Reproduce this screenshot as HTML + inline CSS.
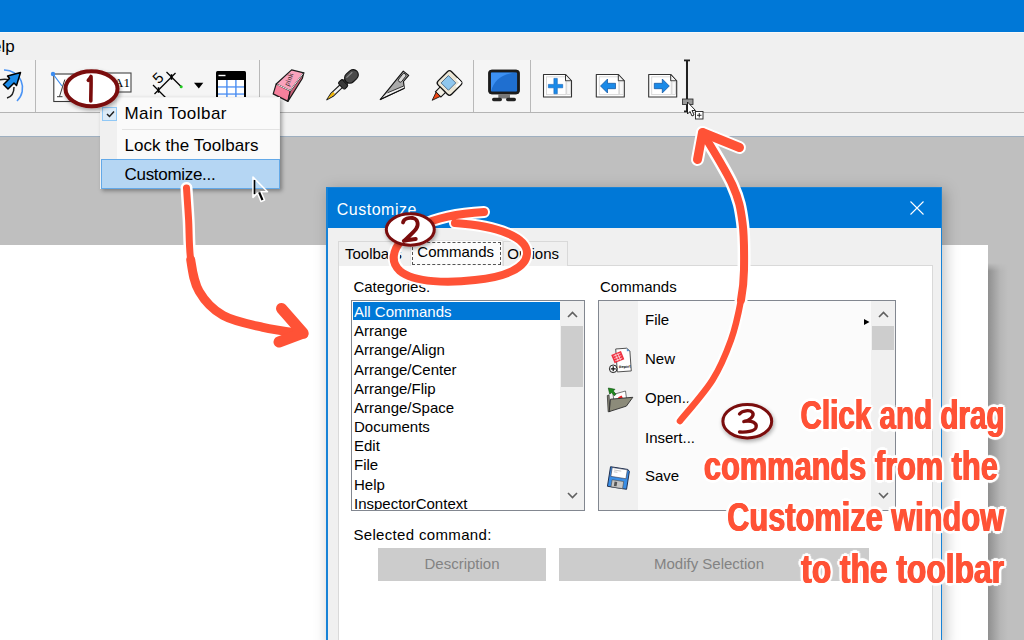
<!DOCTYPE html>
<html><head><meta charset="utf-8">
<style>
*{margin:0;padding:0;box-sizing:border-box}
html,body{width:1024px;height:640px;overflow:hidden;background:#bfbfbf;font-family:"Liberation Sans",sans-serif;position:relative}
.abs{position:absolute}
#title{left:0;top:0;width:1024px;height:32px;background:#0078d7}
#menubar{left:0;top:32px;width:1024px;height:104px;background:#f0f0f0;border-top:1px solid #f8f8f8}
#toolbar{left:0;top:60px;width:685px;height:52px;background:#f5f5f5}
#tbline{left:0;top:112px;width:1024px;height:1px;background:#b4b4b4}
#bluel{left:0;top:136px;width:1024px;height:1px;background:#9eafc0}
#page{left:0;top:245px;width:988px;height:400px;background:#fff}
#pshadow{left:988px;top:263px;width:20px;height:380px;background:linear-gradient(90deg,#8f8f8f,#b5b5b5 60%,#bfbfbf);-webkit-mask-image:linear-gradient(180deg,transparent,#000 8px)}
.sep{width:1px;background:#c8c8c8;top:60px;height:52px}
#dlg{left:326px;top:187px;width:616px;height:460px;background:#f0f0f0;border:1px solid #1883d7;box-shadow:3px 3px 14px rgba(0,0,0,.25)}
#dtitle{left:0;top:0;width:614px;height:40px;background:#0078d7;color:#fff;font-size:16px}
#panel{left:11px;top:77px;width:595px;height:400px;background:#fff;border:1px solid #d9d9d9}
.tab{top:54px;height:24px;background:#f0f0f0;border:1px solid #d9d9d9;border-bottom:none;font-size:15px;color:#000}
.lb{border:1px solid #828790;background:#fff;overflow:hidden}
.li{position:absolute;left:2px;font-size:15px;color:#000;white-space:nowrap}
.sb{background:#f0f0f0}
.txt{position:absolute;white-space:nowrap;color:#000}
#menu{left:100px;top:97px;width:180px;height:92px;background:#fafafa;border:1px solid #f2f2f2;box-shadow:2px 2px 4px rgba(0,0,0,.35)}
.mi{position:absolute;left:25px;font-size:17px;color:#000;white-space:nowrap}
.btn{position:absolute;background:#cccccc;color:#838383;font-size:15px;text-align:center}
.ann{position:absolute;font-weight:bold;color:#ff5236;white-space:nowrap;transform-origin:right top;font-size:41px;line-height:41px;
 text-shadow:0.8px 0 0 #ff5236,-0.8px 0 0 #ff5236,4px 0 1px #fff,-4px 0 1px #fff,0 3px 1px #fff,0 -3px 1px #fff,3px 2px 1px #fff,-3px 2px 1px #fff,3px -2px 1px #fff,-3px -2px 1px #fff}
</style></head><body>
<div id="title" class="abs"></div>
<div id="menubar" class="abs"></div>
<div class="txt" style="left:-8px;top:37px;font-size:17px;color:#000">elp</div>
<div id="toolbar" class="abs"></div>
<div id="tbline" class="abs"></div>
<div id="bluel" class="abs"></div>
<svg class="abs" style="left:0;top:0" width="720" height="125" viewBox="0 0 720 125">
 <g fill="#b9b9b9"><rect x="35" y="60" width="1" height="52"/><rect x="259" y="60" width="1" height="52"/><rect x="473" y="60" width="1" height="52"/><rect x="530" y="60" width="1" height="52"/></g>
 <!-- rotate icon -->
 <path d="M4 70 A18 18 0 0 1 17 101" fill="none" stroke="#4b94f5" stroke-width="1.6"/>
 <path d="M-2 80 C3 79 7 79 9 80" fill="none" stroke="#222" stroke-width="1.5"/>
 <path d="M14 87 C14 93 11 97 7 98" fill="none" stroke="#222" stroke-width="1.5"/>
 <path d="M20.5 72.5 L16.5 85.5 L14 83 L8 89 L3.5 84.5 L9.5 78.5 L7.5 76 Z" fill="#1a8ae8" stroke="#000" stroke-width="1.5" stroke-linejoin="round"/>
 <!-- A box icons -->
 <rect x="53.8" y="74" width="27" height="27.5" fill="#fff" stroke="#3a3a3a" stroke-width="1.1"/>
 <path d="M53 74 L62 86" stroke="#3b8cf0" stroke-width="1.2"/><circle cx="53" cy="74" r="2.2" fill="#3b8cf0"/>
 <path d="M59.5 96.5 L64.8 79.5 M57 96.7 L62.5 96.7" stroke="#222" stroke-width="0.9" fill="none"/>
 <rect x="100" y="73" width="31" height="19" fill="#fff" stroke="#444" stroke-width="1.1"/>
 <text x="114" y="86.8" font-family="Liberation Serif" font-size="13" fill="#000">A1</text>
 <!-- dimension icon -->
 <g stroke="#000" stroke-width="1.2" fill="none">
  <path d="M153 85 L165.5 97.5"/><path d="M166.5 72 L181 86.5"/><path d="M154.5 94 L175.5 73"/>
  <path d="M158.5 87.2 L158.5 92.8" stroke-width="1.6"/><path d="M171.5 74.2 L171.5 79.8" stroke-width="1.6"/>
 </g>
 <text x="0" y="0" font-family="Liberation Sans" font-size="15" fill="#000" text-anchor="middle" transform="translate(161.8,81.6) rotate(-45)">5</text>
 <circle cx="181.2" cy="86.8" r="1.5" fill="#22cc22"/>
 <path d="M194 82.8 L203.3 82.8 L198.8 88.4 Z" fill="#000"/>
 <!-- table icon -->
 <rect x="216" y="71" width="30" height="30" rx="1.5" fill="#000"/>
 <rect x="218" y="80" width="26" height="22" fill="#fff"/>
 <rect x="218.5" y="74.8" width="7" height="1.4" fill="#fff"/>
 <g fill="#4a8ef2"><rect x="226.2" y="80" width="1.4" height="22"/><rect x="235.2" y="80" width="1.4" height="22"/><rect x="218" y="86.3" width="26" height="1.3"/><rect x="218" y="93.4" width="26" height="1.3"/></g>
 <!-- eraser -->
 <path d="M276.2 84 L291.6 69.9 L303.8 72.9 L290.3 90.9 Z" fill="#f9a3bd" stroke="#1a1a1a" stroke-width="1.2" stroke-linejoin="round"/>
 <path d="M276.2 84 L290.3 90.9 L287.9 101.4 L273.2 93.9 Z" fill="#f7809c" stroke="#1a1a1a" stroke-width="1.2" stroke-linejoin="round"/>
 <path d="M290.3 90.9 L303.8 72.9 L302.3 78.5 L287.9 101.4 Z" fill="#c86078" stroke="#1a1a1a" stroke-width="1.2" stroke-linejoin="round"/>
 <path d="M277.3 84.6 L290.3 90.6 L302.8 73.8" stroke="#fff" stroke-width="0.9" fill="none"/>
 <text x="0" y="0" font-family="Liberation Serif" font-size="7.5" fill="#222" transform="translate(288.5,86.5) rotate(-68)">pink</text>
 <!-- eyedropper -->
 <g transform="translate(326.8,99.8) rotate(-43.5)" stroke-linejoin="round">
  <path d="M0 0 L7 -1.8 L20 -1.8 L20 1.8 L7 1.8 Z" fill="#f2f2f2" stroke="#1a1a1a" stroke-width="1.1"/>
  <path d="M0.8 0 L7 -1.2 L10 -1.2 L10 1.2 L7 1.2 Z" fill="#f0b400"/>
  <rect x="19.5" y="-4.6" width="6" height="9.2" rx="2" fill="#3a3a3a" stroke="#111" stroke-width="1"/>
  <rect x="25" y="-2.8" width="2.5" height="5.6" fill="#333" stroke="#111" stroke-width="0.8"/>
  <rect x="26.5" y="-5.2" width="15" height="10.4" rx="5.2" fill="#4a4a4a" stroke="#111" stroke-width="1.1"/>
  <path d="M30 -2.5 L37 -2.5" stroke="#8a8a8a" stroke-width="1.2" stroke-linecap="round"/>
 </g>
 <!-- knife -->
 <path d="M380.2 99.6 L403.3 71.1 L408.7 75.4 L403.5 81.5 L404.3 88.3 Z" fill="#aaaaaa" stroke="#111" stroke-width="1.1" stroke-linejoin="round"/>
 <path d="M381.8 98.3 L387.5 92.8 L403.7 86 L404.2 88.2 Z" fill="#f2f2f2"/>
 <path d="M387.5 92.8 L403.7 86" stroke="#222" stroke-width="0.9"/>
 <path d="M380.2 99.6 L404.3 88.3" stroke="#111" stroke-width="1.1" fill="none"/>
 <rect x="-5" y="-1.9" width="10" height="3.8" rx="1.9" fill="#d8d8d8" stroke="#222" stroke-width="0.9" transform="translate(402.2,77.8) rotate(-52)"/>
 <!-- glue -->
 <g transform="translate(449.5,83) rotate(45)">
  <rect x="-9.5" y="-9.5" width="19" height="19" rx="3" fill="#ebe6d6" stroke="#111" stroke-width="1.3"/>
  <rect x="-6" y="-4.5" width="10.4" height="10.4" fill="#8fc7ee" stroke="#1d3d60" stroke-width="0.6"/>
  <rect x="-3.8" y="9.5" width="7.6" height="6.5" fill="#f2efe4" stroke="#111" stroke-width="1.1"/>
  <path d="M-3 16 L0 24.5 L3 16 Z" fill="#ee4411" stroke="#111" stroke-width="0.8" stroke-linejoin="round"/>
  <path d="M2 -8 L7.5 -8 L7.5 -2" fill="none" stroke="#fff" stroke-width="2"/>
 </g>
 <!-- monitor -->
 <rect x="489.5" y="71" width="29" height="22" rx="2.5" fill="#1f6fd0" stroke="#1b1b1b" stroke-width="2.4"/>
 <path d="M491 91.5 C494 80 502 73.5 517 72.5 L491 72.5 Z" fill="#3c90f2"/>
 <rect x="489.5" y="71" width="29" height="22" rx="2.5" fill="none" stroke="#1b1b1b" stroke-width="2.4"/>
 <rect x="498.3" y="94" width="11.7" height="4.5" fill="#777"/>
 <rect x="492" y="97.8" width="10" height="3.4" rx="1.7" fill="#222"/><rect x="506" y="97.8" width="10" height="3.4" rx="1.7" fill="#222"/>
 <!-- doc icons -->
 <g id="doc">
  <path d="M543.5 74.5 L565.5 74.5 L571.5 80.8 L571.5 97 L543.5 97 Z" fill="#fff" stroke="#333" stroke-width="1.1" stroke-linejoin="round"/>
  <rect x="546.5" y="76.8" width="19.5" height="17.8" fill="none" stroke="#d9d9d9" stroke-width="1"/>
  <path d="M565.5 74.5 L565.5 80.8 L571.5 80.8 Z" fill="#f4f4f4" stroke="#333" stroke-width="1" stroke-linejoin="round"/>
  <rect x="566.8" y="81.8" width="3.6" height="12.8" fill="#f8f8f8" stroke="#c8c8c8" stroke-width="0.6"/>
 </g>
 <path d="M553.9 78.4 L557.3 78.4 L557.3 84.4 L562.7 84.4 L562.7 87.8 L557.3 87.8 L557.3 93.8 L553.9 93.8 L553.9 87.8 L548.4 87.8 L548.4 84.4 L553.9 84.4 Z" fill="#1a8ae8" stroke="#0d5fb8" stroke-width="0.6"/>
 <use href="#doc" x="52.8" y="0"/>
 <path d="M600.5 86 L607.5 79 L607.5 83.3 L615.5 83.3 L615.5 88.7 L607.5 88.7 L607.5 93 Z" fill="#1a8ae8" stroke="#0d4f9c" stroke-width="0.7" stroke-linejoin="round"/>
 <use href="#doc" x="105.2" y="0"/>
 <path d="M669.3 86 L662.3 79 L662.3 83.3 L654.3 83.3 L654.3 88.7 L662.3 88.7 L662.3 93 Z" fill="#1a8ae8" stroke="#0d4f9c" stroke-width="0.7" stroke-linejoin="round"/>
 <!-- insertion marker -->
 <rect x="686" y="60" width="2" height="52" fill="#222"/>
 <rect x="684" y="59.5" width="6" height="1.8" fill="#222"/><rect x="684" y="110.5" width="6" height="1.8" fill="#222"/>
 <rect x="682.5" y="99" width="10.5" height="5.5" fill="#9a9a9a" stroke="#222" stroke-width="0.8"/>
 <path d="M687.5 102 L687.5 114 L690 111.5 L692 116 L694 115 L692 110.5 L695.5 110.5 Z" fill="#fff" stroke="#111" stroke-width="0.9" stroke-linejoin="round"/>
 <rect x="695.5" y="111.5" width="7.5" height="7.5" fill="#fff" stroke="#222" stroke-width="0.9"/>
 <path d="M699.25 113 L699.25 117.5 M697 115.25 L701.5 115.25" stroke="#111" stroke-width="0.9"/>
</svg>
<div id="page" class="abs"></div>
<div id="pshadow" class="abs"></div>

<!-- dialog -->
<div id="dlg" class="abs">
  <div class="abs" style="left:0;top:0;width:1px;height:460px;background:#1883d7;z-index:2"></div>
  <div id="dtitle" class="abs"><span class="txt" style="left:9.8px;top:12.5px;color:#fff;font-size:16px;letter-spacing:0.5px">Customize</span>
  <svg class="abs" style="left:582px;top:12px" width="16" height="16" viewBox="0 0 16 16"><path d="M1.5 1.5 L14.5 14.5 M14.5 1.5 L1.5 14.5" stroke="#fff" stroke-width="1.1"/></svg></div>
  <div id="panel" class="abs"></div>
  <div class="abs tab" style="left:11px;top:53px;width:73px;height:25px"></div>
  <div class="abs tab" style="left:176px;top:53px;width:65px;height:25px"></div>
  <div class="abs tab" style="left:83px;top:52px;width:93px;height:26px;background:#fcfcfc;border-color:#e6e6e6"></div>
  <div class="abs" style="left:85px;top:54px;width:89px;height:23px;border:1px dashed #555"></div>
  <span class="txt" style="left:18px;top:56.5px;font-size:15px">Toolbars</span>
  <span class="txt" style="left:90.3px;top:55.3px;font-size:15px">Commands</span>
  <span class="txt" style="left:180.3px;top:56.5px;font-size:15px">Options</span>
  <span class="txt" style="left:26.4px;top:90px;font-size:15px">Categories:</span>
  <span class="txt" style="left:273px;top:89.5px;font-size:15px">Commands</span>
  <div class="abs lb" style="left:24px;top:112px;width:234px;height:211px">
    <div class="abs" style="left:1px;top:1px;width:207px;height:18px;background:#0078d7"></div>
    <div class="li" style="top:2.00px;color:#fff">All Commands</div>
    <div class="li" style="top:21.17px">Arrange</div>
    <div class="li" style="top:40.34px">Arrange/Align</div>
    <div class="li" style="top:59.51px">Arrange/Center</div>
    <div class="li" style="top:78.68px">Arrange/Flip</div>
    <div class="li" style="top:97.85px">Arrange/Space</div>
    <div class="li" style="top:117.02px">Documents</div>
    <div class="li" style="top:136.19px">Edit</div>
    <div class="li" style="top:155.36px">File</div>
    <div class="li" style="top:174.53px">Help</div>
    <div class="li" style="top:193.70px">InspectorContext</div>
    <div class="abs sb" style="left:208px;top:0;width:24px;height:209px">
      <div class="abs" style="left:1px;top:25px;width:22px;height:61px;background:#cdcdcd"></div>
      <svg class="abs" style="left:7px;top:10px" width="11" height="7" viewBox="0 0 11 7"><path d="M1 6 L5.5 1.5 L10 6" fill="none" stroke="#606060" stroke-width="1.6"/></svg>
      <svg class="abs" style="left:7px;top:191px" width="11" height="7" viewBox="0 0 11 7"><path d="M1 1 L5.5 5.5 L10 1" fill="none" stroke="#606060" stroke-width="1.6"/></svg>
    </div>
  </div>
  <div class="abs lb" style="left:271px;top:112px;width:298px;height:211px;background:#fbfbfb">
    <div class="abs" style="left:0;top:0;width:39px;height:209px;background:#f0f0f0"></div>
    <svg class="abs" style="left:0;top:0" width="38" height="209" viewBox="598 300 38 209">
      <!-- New -->
      <g transform="rotate(-4 622 359)">
       <path d="M615.5 347.5 L626.5 347.5 L629.5 350.5 L629.5 370.5 L615.5 370.5 Z" fill="#fff" stroke="#444" stroke-width="0.9"/>
       <path d="M626.5 347.5 L629.5 350.5 L626.5 350.5 Z" fill="#5a8fc8"/>
       <text x="617.5" y="367" font-size="3.6" font-family="Liberation Sans" font-weight="bold" fill="#000" style="text-rendering:geometricPrecision">Report</text>
      </g>
      <g transform="rotate(-22 617 356)">
       <rect x="611.5" y="351.5" width="10.5" height="9" fill="#f03040"/>
       <path d="M613 353.5 L620.5 353.5 M613 356 L620.5 356 M613 358.5 L620.5 358.5 M615.5 352.5 L615.5 360 M618.2 352.5 L618.2 360" stroke="#fff" stroke-width="0.7" opacity="0.85"/>
      </g>
      <circle cx="612.2" cy="367.8" r="3.8" fill="#fff" stroke="#222" stroke-width="1"/>
      <path d="M612.2 365.3 L612.2 370.3 M609.7 367.8 L614.7 367.8" stroke="#111" stroke-width="1.2"/>
      <!-- Open -->
      <path d="M612 393.5 L624.5 390 L625.5 397.5 L613 400 Z" fill="#fff" stroke="#555" stroke-width="0.8"/>
      <path d="M617 396.5 L620.5 394.5 L621.8 396.8 L618 398 Z" fill="#e22"/>
      <path d="M606.3 394.5 L608 394 L609 410.5 L607.2 410.8 Z" fill="#8c8b7a" stroke="#333" stroke-width="0.8"/>
      <path d="M609.5 398.2 L631.8 396.3 L625.4 405.1 L608.2 410.6 Z" fill="#8c8b7a" stroke="#2a2a2a" stroke-width="0.9" stroke-linejoin="round"/>
      <path d="M607.3 387 L614 388.3 L612.3 390 L615 393.3 L613.2 394.8 L610.5 391.6 L608.7 393.2 Z" fill="#1e8a1e" stroke="#0b4a0b" stroke-width="0.6" stroke-linejoin="round"/>
      <!-- Save -->
      <g transform="translate(617.5 477) rotate(9) scale(0.9) translate(-618.2 -477)">
       <path d="M607.5 466 L627 466 L629 468 L629 488 L607.5 488 Z" fill="#3a8ee6" stroke="#1a2a4a" stroke-width="1"/>
       <rect x="609.5" y="466.5" width="17" height="10" fill="#fff" stroke="#334" stroke-width="0.6"/>
       <path d="M612 469 L620 469 M612 471 L616 471" stroke="#888" stroke-width="0.5"/>
       <rect x="611.5" y="480" width="13" height="8" fill="#c6c6c6" stroke="#444" stroke-width="0.6"/>
       <rect x="614.5" y="481.5" width="3" height="5" fill="#555"/>
      </g>
    </svg>
    <div class="li" style="left:46px;top:10.10px">File</div>
    <div class="li" style="left:46px;top:49.20px">New</div>
    <div class="li" style="left:46px;top:88.00px">Open..</div>
    <div class="li" style="left:46px;top:127.70px">Insert...</div>
    <div class="li" style="left:46px;top:166.10px">Save</div>
    <svg class="abs" style="left:265px;top:18px" width="6" height="6" viewBox="0 0 6 6"><path d="M0 0 L5.5 3 L0 6Z" fill="#000"/></svg>
    <div class="abs sb" style="left:272px;top:0;width:24px;height:209px">
      <div class="abs" style="left:1px;top:25px;width:22px;height:24px;background:#cdcdcd"></div>
      <svg class="abs" style="left:7px;top:10px" width="11" height="7" viewBox="0 0 11 7"><path d="M1 6 L5.5 1.5 L10 6" fill="none" stroke="#606060" stroke-width="1.6"/></svg>
      <svg class="abs" style="left:7px;top:191px" width="11" height="7" viewBox="0 0 11 7"><path d="M1 1 L5.5 5.5 L10 1" fill="none" stroke="#606060" stroke-width="1.6"/></svg>
    </div>
  </div>
  <span class="txt" style="left:26.4px;top:338px;font-size:15px;letter-spacing:0.34px">Selected command:</span>
  <div class="btn" style="left:51px;top:360px;width:168px;height:33px;line-height:31px">Description</div>
  <div class="btn" style="left:232px;top:360px;width:310px;height:33px;line-height:31px;padding-right:10px">Modify Selection</div>
</div>

<!-- context menu -->
<div id="menu" class="abs">
  <div class="abs" style="left:-1px;top:-1px;width:17px;height:62px;background:#f0f0f0"></div>
  <div class="abs" style="left:1px;top:9px;width:15px;height:14px;background:#dcebf8;border:1px solid #90c8f6"></div>
  <svg class="abs" style="left:5px;top:12px" width="9" height="8" viewBox="0 0 9 8"><path d="M1 4 L3.5 6.5 L8 1.5" fill="none" stroke="#202020" stroke-width="1.5"/></svg>
  <div class="abs" style="left:21px;top:31px;width:158px;height:1px;background:#e3e3e3"></div>
  <div class="abs" style="left:0;top:61px;width:179px;height:30px;background:#b5d6f3;border:1px solid #63a9e8"></div>
  <div class="mi" style="left:23.5px;top:6px;letter-spacing:0.45px">Main Toolbar</div>
  <div class="mi" style="left:23.5px;top:37.6px;letter-spacing:0.06px">Lock the Toolbars</div>
  <div class="mi" style="left:23.5px;top:66.6px;letter-spacing:-0.3px">Customize...</div>
</div>

<!-- annotations -->
<svg id="annsvg" class="abs" style="left:0;top:0" width="1024" height="640" viewBox="0 0 1024 640">
 <defs>
  <filter id="sh" x="-30%" y="-30%" width="160%" height="160%"><feGaussianBlur in="SourceAlpha" stdDeviation="2"/><feOffset dx="1" dy="2"/><feComponentTransfer><feFuncA type="linear" slope="0.35"/></feComponentTransfer><feMerge><feMergeNode/><feMergeNode in="SourceGraphic"/></feMerge></filter>
 </defs>
 <g fill="none" stroke-linecap="round" stroke-linejoin="round">
  <!-- arrow 1 -->
  <g stroke="#fff" stroke-width="12">
   <path d="M186.5 188 C186.8 193.3 187.9 207.9 188.6 219.8 C189.3 231.7 188.9 247.7 190.7 259.6 C192.5 271.6 193.8 282.2 199.2 291.5 C204.6 300.8 212.4 309.4 223 315.4 C233.6 321.4 249.5 324.2 263 327.3 C276.5 330.4 297.2 332.9 304 334"/>
   <path d="M282 309 L303 333 L279 342"/>
  </g>
  <g stroke="#ff5236">
   <path stroke-width="7" d="M186.5 188 C186.8 193.3 187.9 207.9 188.6 219.8 C189.3 231.7 188.9 247.7 190.7 259.6 C192.5 271.6 193.8 282.2 199.2 291.5 C204.6 300.8 212.4 309.4 223 315.4 C233.6 321.4 249.5 324.2 263 327.3 C276.5 330.4 297.2 332.9 304 334"/>
   <path stroke-width="9" d="M190.7 259.6 C192.5 271.6 193.8 282.2 199.2 291.5 C204.6 300.8 212.4 309.4 223 315.4 C233.6 321.4 249.5 324.2 263 327.3 C276.5 330.4 297.2 332.9 304 334"/>
   <path stroke-width="11" d="M281.5 308.5 L303 333 L279 342"/>
  </g>
  <!-- loop around Commands -->
  <path stroke="#fff" stroke-width="12" d="M484 212 C465 213 440 216 420 226 C397 238 386 258 400 271 C414 283 450 283 475 280 C505 277 527 268 527 253 C527 238 500 226 455 223"/>
  <path stroke="#ff5236" stroke-width="8" d="M484 212 C465 213 440 216 420 226 C397 238 386 258 400 271 C414 283 450 283 475 280 C505 277 527 268 527 253 C527 238 500 226 455 223"/>
  <!-- arrow 3 -->
  <g stroke="#fff" stroke-width="11">
   <path d="M680 421 C685.4 414.2 704.0 393.5 712.5 380 C721.0 366.5 726.2 353.3 731 340 C735.8 326.7 738.8 311.7 741 300 C743.2 288.3 743.8 282.9 744 270 C744.2 257.1 744.4 236.7 742.5 222.5 C740.6 208.3 739.2 200.0 732.5 185 C725.8 170.0 707.5 141.2 702.5 132.5"/>
   <path stroke-width="13" d="M741 300 C743.2 288.3 743.8 282.9 744 270 C744.2 257.1 744.4 236.7 742.5 222.5 C740.6 208.3 739.2 200.0 732.5 185 C725.8 170.0 707.5 141.2 702.5 132.5"/>
   <path stroke-width="13" d="M697.5 159.5 L702.5 132.5 L739.5 147.5"/>
  </g>
  <g stroke="#ff5236">
   <path stroke-width="6.5" d="M680 421 C685.4 414.2 704.0 393.5 712.5 380 C721.0 366.5 726.2 353.3 731 340 C735.8 326.7 738.8 311.7 741 300 C743.2 288.3 743.8 282.9 744 270 C744.2 257.1 744.4 236.7 742.5 222.5 C740.6 208.3 739.2 200.0 732.5 185 C725.8 170.0 707.5 141.2 702.5 132.5"/>
   <path stroke-width="8" d="M741 300 C743.2 288.3 743.8 282.9 744 270 C744.2 257.1 744.4 236.7 742.5 222.5 C740.6 208.3 739.2 200.0 732.5 185 C725.8 170.0 707.5 141.2 702.5 132.5"/>
   <path stroke-width="9" d="M697.5 159.5 L702.5 132.5 L739.5 147.5"/>
  </g>
 </g>
 <!-- badges -->
 <g filter="url(#sh)">
  <ellipse cx="91.5" cy="88.7" rx="26" ry="17.5" fill="#fff" stroke="#7a0c0c" stroke-width="4"/>
  <ellipse cx="410.3" cy="229.5" rx="24" ry="15.7" fill="#fff" stroke="#7a0c0c" stroke-width="3"/>
  <ellipse cx="747.3" cy="421.2" rx="24.4" ry="16.7" fill="#fff" stroke="#7a0c0c" stroke-width="3"/>
 </g>
 <g fill="none" stroke="#7a0c0c" stroke-linecap="round" stroke-linejoin="round">
  <path stroke-width="3.6" d="M88.3 80.3 C89.6 79 90.5 77.5 91 76.5 C91.3 84 90.8 93 90.8 101"/>
  <path stroke-width="3.8" d="M403 222.5 C404 218.5 409 217.5 413 218 C418 219 419 225 416 229 C413 233 407 238 403.8 241 C407 240 412 239.5 415.8 239"/>
  <path stroke-width="3.3" d="M739.5 414 C742 410.5 750 409.5 752.5 412.5 C755 416 749 421 743.8 421.5 C752 420 757.5 423 756 427.5 C754.5 431.5 746 432.5 739.5 432"/>
 </g>
</svg>
<div class="ann" style="right:19.6px;top:395.3px;transform:scaleX(0.722)">Click and drag</div>
<div class="ann" style="right:26.4px;top:446px;transform:scaleX(0.750)">commands from the</div>
<div class="ann" style="right:19.6px;top:496.5px;transform:scaleX(0.750)">Customize window</div>
<div class="ann" style="right:19.6px;top:548.8px;transform:scaleX(0.774)">to the toolbar</div>
<svg class="abs" style="left:248px;top:172px" width="26" height="34" viewBox="248 172 26 34">
  <path d="M253 177 L253 197.5 L257.5 193 L261 201.5 L264.5 200 L261 191.8 L267.5 191.8 Z" fill="rgba(255,255,255,0.05)" stroke="#fff" stroke-width="1.6" stroke-linejoin="round"/>
  <path d="M254.5 180 L254.5 194" stroke="#000" stroke-width="1.6"/>
  <path d="M259.2 192.5 L262.5 200" stroke="#000" stroke-width="2"/>
</svg>
</body></html>
